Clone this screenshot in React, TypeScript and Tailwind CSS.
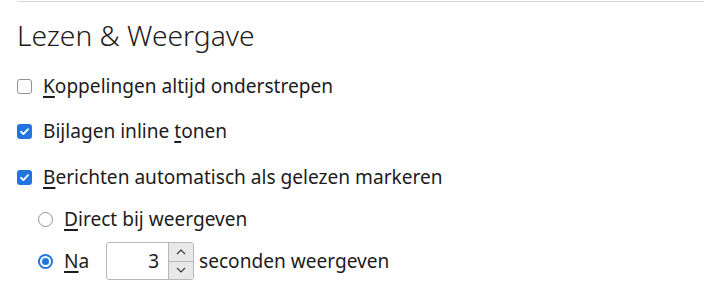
import React, { useState } from 'react';

const font = { fontFamily: '"Noto Sans", "Open Sans", sans-serif' };

const Mnemonic: React.FC<{ text: string; index: number }> = ({ text, index }) => (
  <span>
    {text.slice(0, index)}
    <span className="underline decoration-[1.5px] underline-offset-[3px]">{text[index]}</span>
    {text.slice(index + 1)}
  </span>
);

const Check: React.FC<{ checked: boolean }> = ({ checked }) =>
  checked ? (
    <span className="w-[15px] h-[15px] rounded-[3px] bg-[#2474e0] flex items-center justify-center shrink-0">
      <svg width="11" height="11" viewBox="0 0 12 12" fill="none">
        <path d="M2.2 6.3 L4.8 8.8 L9.8 3.4" stroke="white" strokeWidth="2" strokeLinecap="round" strokeLinejoin="round" />
      </svg>
    </span>
  ) : (
    <span className="w-[15px] h-[15px] rounded-[3px] border border-[#8f8f9d] bg-white shrink-0" />
  );

const Radio: React.FC<{ checked: boolean }> = ({ checked }) =>
  checked ? (
    <span className="w-[15px] h-[15px] rounded-full bg-[#2474e0] flex items-center justify-center shrink-0">
      <span className="w-[7px] h-[7px] rounded-full bg-[#2474e0] border-2 border-white box-content" />
    </span>
  ) : (
    <span className="w-[15px] h-[15px] rounded-full border border-[#8f8f9d] bg-white shrink-0" />
  );

export default function App() {
  const [underline, setUnderline] = useState(false);
  const [inline, setInline] = useState(true);
  const [markRead, setMarkRead] = useState(true);
  const [mode, setMode] = useState<'direct' | 'delay'>('delay');
  const [seconds, setSeconds] = useState(3);

  return (
    <div className="w-[704px] h-[308px] bg-white text-[#1c1b20] overflow-hidden" style={font}>
      <div className="ml-[17px] border-t border-[#d6d6d6] mt-px" />
      <div className="pl-[17px]">
        <h1 className="text-[28.2px] font-light leading-[28px] h-[28px] mt-[19px] mb-[27px]">Lezen &amp; Weergave</h1>

        <div className="flex flex-col text-[19.1px] leading-[20px]">
          <label className="flex items-center gap-[11px] h-[20px]" onClick={() => setUnderline(!underline)}>
            <Check checked={underline} />
            <Mnemonic text="Koppelingen altijd onderstrepen" index={0} />
          </label>

          <label className="flex items-center gap-[11px] h-[20px] mt-[25px]" onClick={() => setInline(!inline)}>
            <Check checked={inline} />
            <Mnemonic text="Bijlagen inline tonen" index={16} />
          </label>

          <label className="flex items-center gap-[11px] h-[20px] mt-[26px]" onClick={() => setMarkRead(!markRead)}>
            <Check checked={markRead} />
            <Mnemonic text="Berichten automatisch als gelezen markeren" index={0} />
          </label>

          <div className="pl-[21px] flex flex-col">
            <label className="flex items-center gap-[11px] h-[20px] mt-[22px]" onClick={() => setMode('direct')}>
              <Radio checked={mode === 'direct'} />
              <Mnemonic text="Direct bij weergeven" index={0} />
            </label>

            <div className="flex items-center h-[38px] mt-[13px]">
              <label className="flex items-center gap-[11px] w-[68px]" onClick={() => setMode('delay')}>
                <Radio checked={mode === 'delay'} />
                <Mnemonic text="Na" index={0} />
              </label>
              <div className="flex h-[38px] w-[88px] border border-[#b8b8b8] rounded-[3px] overflow-hidden">
                <div className="flex-1 flex items-center justify-end pr-[9px] text-[19px]">{seconds}</div>
                <div className="w-[25px] flex flex-col border-l border-[#b8b8b8] bg-[#e8e8e8]">
                  <button className="flex-1 flex items-center justify-center border-b border-[#b8b8b8]" onClick={() => setSeconds(seconds + 1)}>
                    <svg width="10" height="6" viewBox="0 0 10 6" fill="none">
                      <path d="M1 5 L5 1 L9 5" stroke="#3a3a3a" strokeWidth="1.1" />
                    </svg>
                  </button>
                  <button className="flex-1 flex items-center justify-center" onClick={() => setSeconds(Math.max(0, seconds - 1))}>
                    <svg width="10" height="6" viewBox="0 0 10 6" fill="none">
                      <path d="M1 1 L5 5 L9 1" stroke="#3a3a3a" strokeWidth="1.1" />
                    </svg>
                  </button>
                </div>
              </div>
              <span className="ml-[5px]">seconden weergeven</span>
            </div>
          </div>
        </div>
      </div>
    </div>
  );
}
